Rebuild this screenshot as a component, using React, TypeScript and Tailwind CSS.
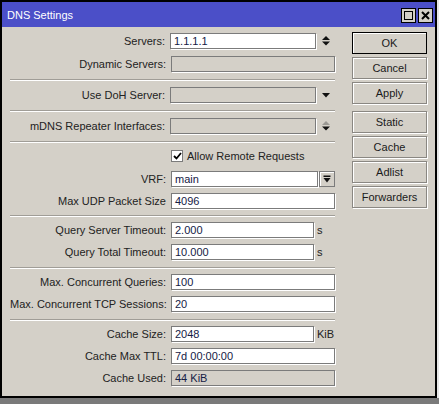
import React from 'react';

const font = { fontFamily: '"Liberation Sans", Arial, sans-serif' };

function Sep({ className = '' }: { className?: string }) {
  return <div className={`h-[2px] border-t border-[#a09d97] border-b border-b-white -mb-px ${className}`}></div>;
}

function Field({ value = '', disabled = false, width = 'w-[164px]' }: { value?: string; disabled?: boolean; width?: string }) {
  return (
    <div
      className={`${width} h-[16px] border border-[#7b7b7b] px-[3px] flex items-center text-[11px] leading-none text-[#142045] ${
        disabled ? 'bg-[#d4d0c8] text-[#2a2a2a]' : 'bg-white'
      } shadow-[1px_1px_0_#fff]`}
    >
      {value}
    </div>
  );
}

function Row({ label, children, className = '' }: { label: string; children: React.ReactNode; className?: string }) {
  return (
    <div className={`flex items-center h-[16px] ${className}`}>
      <div className="w-[156px] text-right text-[11px] text-[#222] whitespace-nowrap">{label}</div>
      <div className="ml-[5px] flex items-center">{children}</div>
    </div>
  );
}

function UpDown({ dimUp = false }: { dimUp?: boolean }) {
  return (
    <svg width="18" height="12" viewBox="0 0 18 12" className="ml-px">
      <polygon points="5,5 13,5 9,1" fill={dimUp ? '#9a9893' : '#111'} />
      <polygon points="5,6.5 13,6.5 9,10.5" fill="#111" />
    </svg>
  );
}

function Button({ label, primary = false, className = '' }: { label: string; primary?: boolean; className?: string }) {
  return (
    <div
      className={`h-[22px] w-[75px] flex items-center justify-center text-[11px] text-[#1a1a1a] bg-[#d4d0c8] ${
        primary ? 'border border-black shadow-[inset_1px_1px_0_#fff]' : 'border border-[#8a8782] shadow-[inset_1px_1px_0_#fff,1px_1px_0_#fff]'
      } ${className}`}
    >
      {label}
    </div>
  );
}

export default function App() {
  return (
    <div className="w-[439px] h-[404px] bg-[#7a7a7a] flex flex-col" style={font}>
      <div className="flex h-[398px]">
        <div className="w-[437px] h-[398px] border-2 border-black bg-[#d4d0c8] flex flex-col">
          {/* title bar */}
          <div className="h-[25px] bg-[#4b4fc8] flex items-center pl-[5px] pr-[2px]">
            <span className="text-white text-[11px] mt-[2px]">DNS Settings</span>
            <div className="ml-auto flex gap-[2px] mt-[2px]">
              <div className="w-[15px] h-[15px] bg-[#d4d0c8] border border-black flex items-center justify-center">
                <div className="w-[9px] h-[9px] border border-black"></div>
              </div>
              <div className="w-[15px] h-[15px] bg-[#d4d0c8] border border-black flex items-center justify-center">
                <svg width="9" height="9" viewBox="0 0 9 9">
                  <path d="M1 1 L8 8 M8 1 L1 8" stroke="#000" strokeWidth="2" />
                </svg>
              </div>
            </div>
          </div>

          <div className="flex flex-1 pl-[8px] pr-[8px]">
            {/* fields */}
            <div className="w-[325px] pt-[6px] flex flex-col gap-[6px]">
              <Row label="Servers:">
                <Field value="1.1.1.1" width="w-[146px]" />
                <UpDown />
              </Row>
              <Row label="Dynamic Servers:" className="mt-px">
                <Field disabled />
              </Row>
              <Sep className="mt-px" />
              <Row label="Use DoH Server:" className="mt-px">
                <Field disabled width="w-[146px]" />
                <svg width="18" height="8" viewBox="0 0 18 8" className="ml-px">
                  <polygon points="5,2 13,2 9,6.5" fill="#111" />
                </svg>
              </Row>
              <Sep className="mt-px" />
              <Row label="mDNS Repeater Interfaces:" className="mt-px">
                <Field disabled width="w-[146px]" />
                <UpDown dimUp />
              </Row>
              <Sep className="mt-px" />
              <Row label="">
                <div className="flex items-center">
                  <div className="w-[12px] h-[12px] bg-white border border-[#7b7b7b] flex items-center justify-center">
                    <svg width="9" height="8" viewBox="0 0 9 8">
                      <path d="M1 4 L3.5 6.5 L8 1" stroke="#000" strokeWidth="1.8" fill="none" />
                    </svg>
                  </div>
                  <span className="ml-[4px] text-[11px] text-[#222] whitespace-nowrap">Allow Remote Requests</span>
                </div>
              </Row>
              <Row label="VRF:" className="mt-px">
                <Field value="main" width="w-[147px]" />
                <div className="ml-px w-[16px] h-[16px] border border-[#7b7b7b] bg-[#d4d0c8] shadow-[inset_1px_1px_0_#fff] flex items-center justify-center">
                  <svg width="8" height="9" viewBox="0 0 8 9">
                    <rect x="0.5" y="0.5" width="7" height="1.5" fill="#111" />
                    <polygon points="0.5,3 7.5,3 4,7.5" fill="#111" />
                  </svg>
                </div>
              </Row>
              <Row label="Max UDP Packet Size">
                <Field value="4096" />
              </Row>
              <Sep />
              <Row label="Query Server Timeout:">
                <Field value="2.000" width="w-[143px]" />
                <span className="ml-[3px] text-[11px] text-[#222]">s</span>
              </Row>
              <Row label="Query Total Timeout:">
                <Field value="10.000" width="w-[143px]" />
                <span className="ml-[3px] text-[11px] text-[#222]">s</span>
              </Row>
              <Sep className="mt-px" />
              <Row label="Max. Concurrent Queries:">
                <Field value="100" />
              </Row>
              <Row label="Max. Concurrent TCP Sessions:">
                <Field value="20" />
              </Row>
              <Sep className="mt-px" />
              <Row label="Cache Size:">
                <Field value="2048" width="w-[143px]" />
                <span className="ml-[3px] text-[11px] text-[#222]">KiB</span>
              </Row>
              <Row label="Cache Max TTL:">
                <Field value="7d 00:00:00" />
              </Row>
              <Row label="Cache Used:">
                <Field value="44 KiB" disabled />
              </Row>
            </div>

            {/* buttons */}
            <div className="ml-[17px] pt-[5px] flex flex-col gap-[3px]">
              <Button label="OK" primary />
              <Button label="Cancel" />
              <Button label="Apply" />
              <Button label="Static" className="mt-[4px]" />
              <Button label="Cache" />
              <Button label="Adlist" />
              <Button label="Forwarders" />
            </div>
          </div>
        </div>
        <div className="w-[2px] bg-[#e6e6e6]"></div>
      </div>
    </div>
  );
}
